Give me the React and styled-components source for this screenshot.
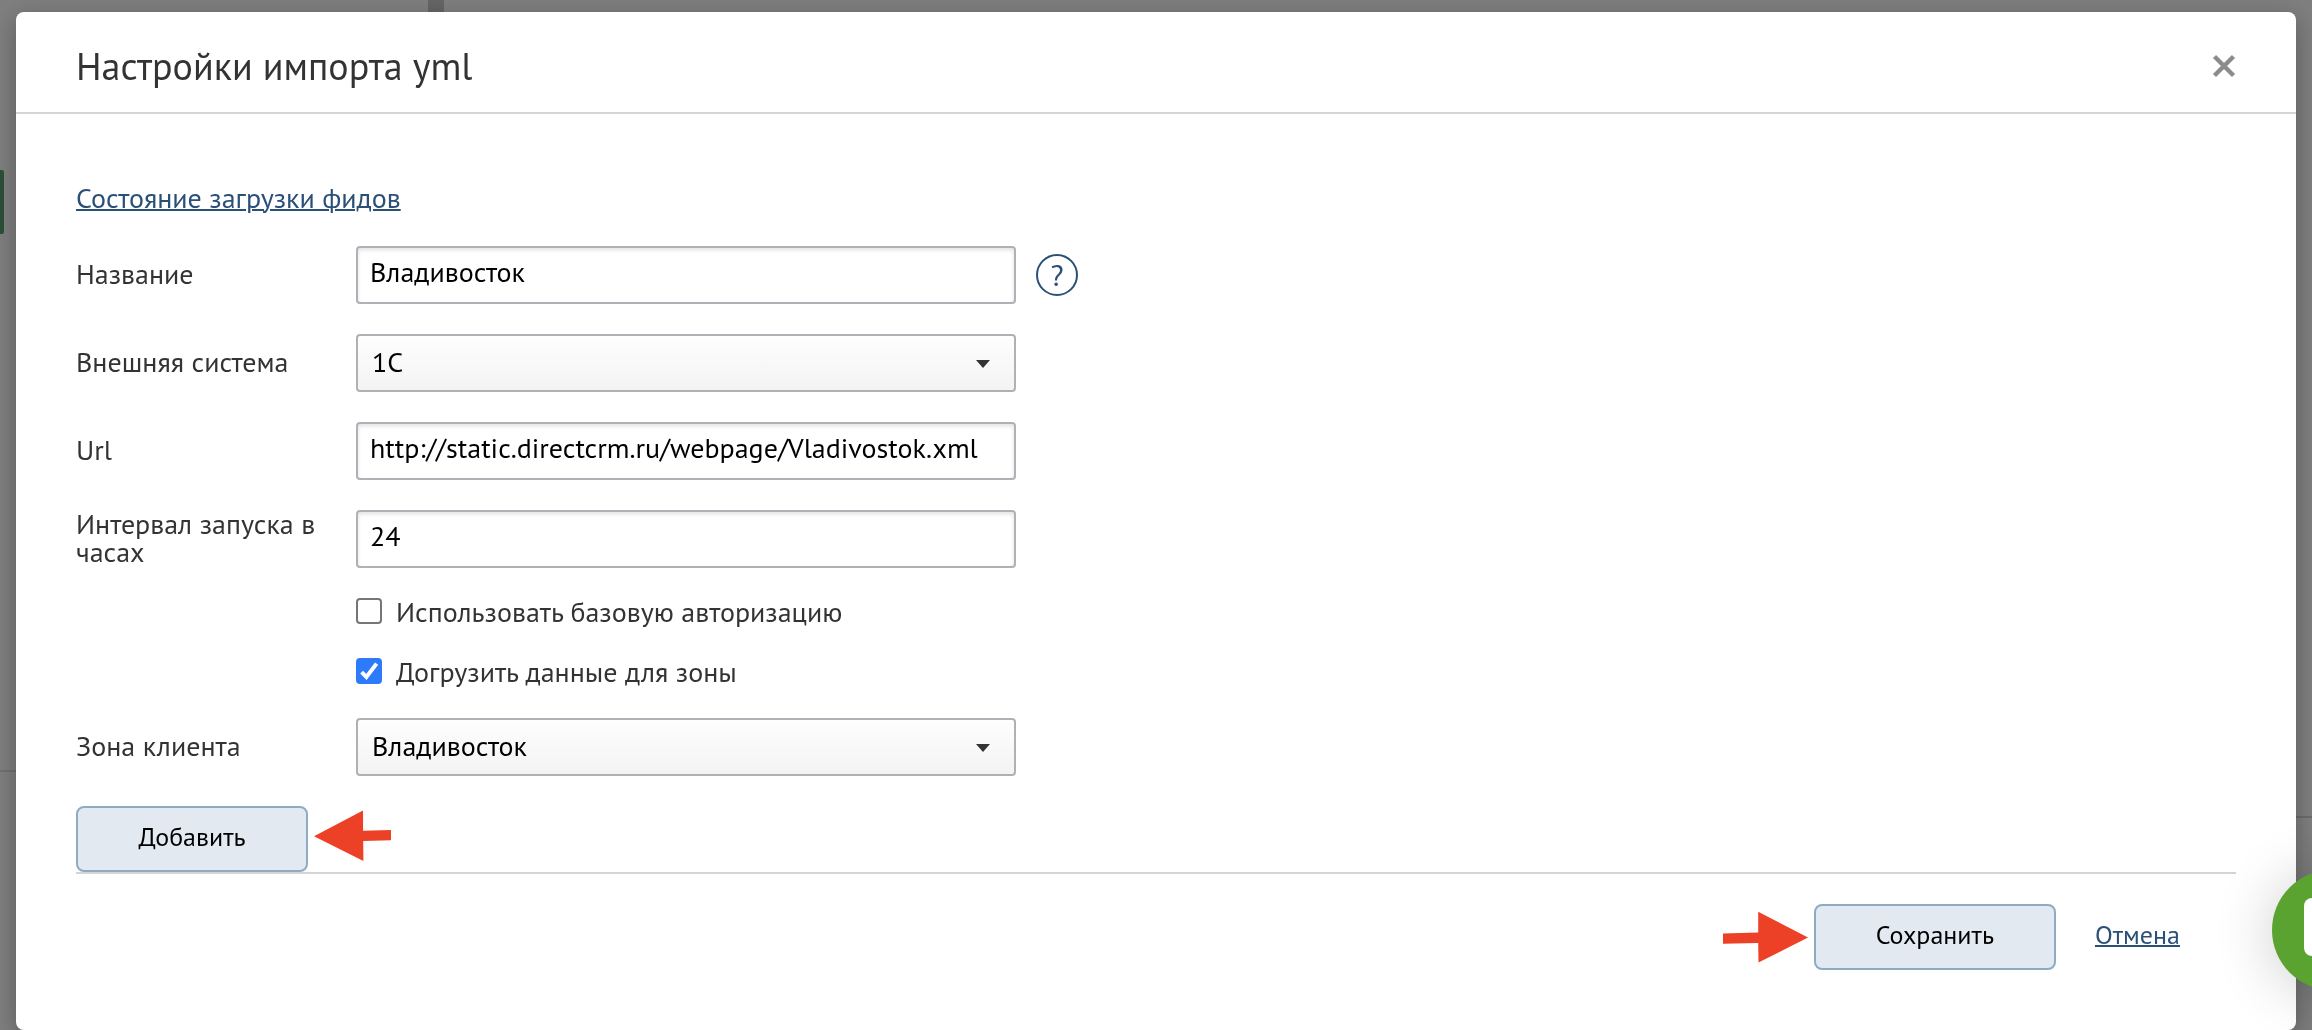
import React, { useState } from 'react'
import styled, { createGlobalStyle, css } from 'styled-components'

const GlobalStyle = createGlobalStyle`
  *, *::before, *::after {
    box-sizing: border-box;
  }

  body {
    margin: 0;
    background: #7f7f7f;
    color: #333;
    font: 28px/28px 'PT Sans', 'Noto Sans', sans-serif;
  }
`

const SYSTEMS = ['1C', 'МойСклад']
const ZONES = ['Владивосток', 'Москва']

const SelectField = ({ id, options, value, onChange }) => (
  <SelectBox>
    <Select id={id} value={value} onChange={e => onChange(e.target.value)}>
      {options.map(option => (
        <option key={option}>{option}</option>
      ))}
    </Select>
    <Caret viewBox="0 0 14 8" aria-hidden="true">
      <path d="M0 0h14L7 8z" fill="#333" />
    </Caret>
  </SelectBox>
)

const CheckField = ({ label, checked, onChange }) => (
  <CheckLabel>
    <CheckBox>
      <CheckInput
        type="checkbox"
        checked={checked}
        onChange={e => onChange(e.target.checked)}
      />
      {checked && (
        <Tick viewBox="0 0 26 26" aria-hidden="true">
          <path d="M5.6 14.2l4.8 4.8L20.6 5.6" />
        </Tick>
      )}
    </CheckBox>
    {label}
  </CheckLabel>
)

const App = () => {
  const [name, setName] = useState('Владивосток')
  const [system, setSystem] = useState('1C')
  const [url, setUrl] = useState(
    'http://static.directcrm.ru/webpage/Vladivostok.xml'
  )
  const [interval, setInterval] = useState('24')
  const [auth, setAuth] = useState(false)
  const [byZone, setByZone] = useState(true)
  const [zone, setZone] = useState('Владивосток')

  return (
    <>
      <GlobalStyle />

      <Page aria-hidden="true">
        <Sidebar>
          <ActiveItem />
        </Sidebar>
        <Splitter />
        <Content />
      </Page>

      <Modal role="dialog" aria-labelledby="title">
        <Header>
          <Title id="title">Настройки импорта yml</Title>
          <Close type="button" aria-label="Закрыть">
            <svg width="24" height="24" viewBox="0 0 24 24">
              <path
                d="M2.5 2.5l19 19M21.5 2.5l-19 19"
                stroke="#8a8b8b"
                strokeWidth="4.4"
              />
            </svg>
          </Close>
        </Header>

        <Body>
          <StatusLink href="#feeds">Состояние загрузки фидов</StatusLink>

          <Fields>
            <Label htmlFor="name">Название</Label>
            <Input
              id="name"
              value={name}
              onChange={e => setName(e.target.value)}
            />
            <Help type="button">?</Help>

            <Label htmlFor="system">Внешняя система</Label>
            <SelectField
              id="system"
              options={SYSTEMS}
              value={system}
              onChange={setSystem}
            />

            <Label htmlFor="url">Url</Label>
            <Input
              id="url"
              value={url}
              onChange={e => setUrl(e.target.value)}
            />

            <Label htmlFor="interval">Интервал запуска в часах</Label>
            <Input
              id="interval"
              value={interval}
              onChange={e => setInterval(e.target.value)}
            />

            <CheckField
              label="Использовать базовую авторизацию"
              checked={auth}
              onChange={setAuth}
            />
            <CheckField
              label="Догрузить данные для зоны"
              checked={byZone}
              onChange={setByZone}
            />

            <Label htmlFor="zone">Зона клиента</Label>
            <SelectField
              id="zone"
              options={ZONES}
              value={zone}
              onChange={setZone}
            />
          </Fields>

          <AddRow>
            <Button type="button">Добавить</Button>
            <svg width="78" height="58" viewBox="0 0 78 58" aria-hidden="true">
              <path
                d="M0 26.3L49 .5l.1 20.2L77 20v10.3l-27.8.7.2 20z"
                fill="#ed4127"
              />
            </svg>
          </AddRow>

          <Footer>
            <svg width="86" height="52" viewBox="0 0 86 52" aria-hidden="true">
              <path
                d="M86 26.5L36.2.8v20.6L1 22.4v10.3l35.2-.6.3 19.5z"
                fill="#ed4127"
              />
            </svg>
            <Button type="button">Сохранить</Button>
            <Cancel href="#cancel">Отмена</Cancel>
          </Footer>
        </Body>
      </Modal>

      <Chat type="button" aria-label="Чат">
        <ChatIcon />
      </Chat>
    </>
  )
}

const Page = styled.div`
  position: fixed;
  inset: 0;
  display: flex;
`

const Sidebar = styled.div`
  flex: 0 0 428px;
  height: 772px;
  padding-top: 170px;
  border-bottom: 2px solid #717171;
`

const ActiveItem = styled.div`
  width: 4px;
  height: 64px;
  border-radius: 0 2px 2px 0;
  background: #2d4f39;
`

const Splitter = styled.div`
  flex: 0 0 16px;
  background: #666;
`

const Content = styled.div`
  flex: 1;
  height: 818px;
  border-bottom: 2px solid #6c6c6c;
`

const Modal = styled.section`
  position: relative;
  margin: 12px 16px 0;
  border-radius: 8px;
  background: #fff;
  box-shadow: 0 6px 24px rgba(0, 0, 0, 0.3);
`

const Header = styled.header`
  display: flex;
  align-items: center;
  justify-content: space-between;
  padding: 28px 60px 20px;
  border-bottom: 2px solid #d4d4d4;
`

const Title = styled.h1`
  margin: 0;
  font-size: 38px;
  font-weight: 400;
  line-height: 52px;
`

const Close = styled.button`
  display: flex;
  padding: 0;
  border: 0;
  background: none;
  cursor: pointer;
`

const Body = styled.form`
  padding: 68px 60px 60px;
`

const link = css`
  color: #2b5078;
  text-decoration: underline;
  text-decoration-thickness: 2px;
`

const StatusLink = styled.a`
  ${link}
  display: inline-block;
  margin-bottom: 32px;
  line-height: 32px;
  vertical-align: top;
`

const Fields = styled.div`
  display: grid;
  grid-template-columns: 280px minmax(0, 660px) auto;
  row-gap: 30px;
  align-items: center;
  justify-content: start;
`

const Label = styled.label`
  grid-column: 1;
  padding: 0 30px 2px 0;
`

const control = css`
  display: block;
  width: 100%;
  height: 58px;
  border: 2px solid #b0b0b6;
  border-radius: 4px;
  color: #000;
  font: inherit;
`

const Input = styled.input`
  ${control}
  padding: 0 12px 8px;
  background: #fff;
  box-shadow: inset 0 2px 4px rgba(0, 0, 0, 0.12);
`

const SelectBox = styled.div`
  position: relative;
`

const Select = styled.select`
  ${control}
  appearance: none;
  padding: 0 60px 2px 14px;
  background: linear-gradient(#fefefe, #f3f3f3);
`

const Caret = styled.svg`
  position: absolute;
  top: 26px;
  right: 26px;
  width: 14px;
  height: 8px;
  pointer-events: none;
`

const Help = styled.button`
  width: 42px;
  height: 42px;
  margin-left: 20px;
  padding: 0;
  border: 2px solid #2b5078;
  border-radius: 50%;
  background: none;
  color: #2b5078;
  font: inherit;
  font-size: 30px;
  cursor: pointer;
`

const CheckLabel = styled.label`
  grid-column: 2;
  display: flex;
  align-items: flex-start;
  gap: 14px;
  height: 30px;
`

const CheckBox = styled.span`
  position: relative;
  flex: none;
  width: 26px;
  height: 26px;
`

const CheckInput = styled.input`
  appearance: none;
  display: block;
  width: 26px;
  height: 26px;
  margin: 0;
  border: 2px solid #767676;
  border-radius: 4px;
  background: #fff;

  &:checked {
    border-color: #2d7bfb;
    background: #2d7bfb;
  }
`

const Tick = styled.svg`
  position: absolute;
  inset: 0;
  fill: none;
  stroke: #fff;
  stroke-width: 4;
  pointer-events: none;
`

const AddRow = styled.div`
  display: flex;
  align-items: center;
  gap: 6px;
  margin-top: 30px;
`

const Button = styled.button`
  min-width: 232px;
  height: 66px;
  padding: 0 60px 4px;
  border: 2px solid #8fabc4;
  border-radius: 8px;
  background: #e2e9f0;
  color: #000;
  font: inherit;
  font-size: 26px;
  cursor: pointer;
`

const Footer = styled.footer`
  display: flex;
  align-items: center;
  justify-content: flex-end;
  gap: 6px;
  padding: 30px 56px 0 0;
  border-top: 2px solid #d4d4d4;
`

const Cancel = styled.a`
  ${link}
  margin-left: 33px;
  padding-bottom: 4px;
  font-size: 26px;
`

const Chat = styled.button`
  position: fixed;
  right: -80px;
  bottom: 40px;
  display: flex;
  align-items: center;
  width: 120px;
  height: 120px;
  padding: 0 0 6px 32px;
  border: 0;
  border-radius: 50%;
  background: #5aa331;
  box-shadow: 0 4px 60px rgba(0, 0, 0, 0.2);
`

const ChatIcon = styled.span`
  width: 56px;
  height: 58px;
  border-radius: 8px;
  background: #fff;
`

export default App
